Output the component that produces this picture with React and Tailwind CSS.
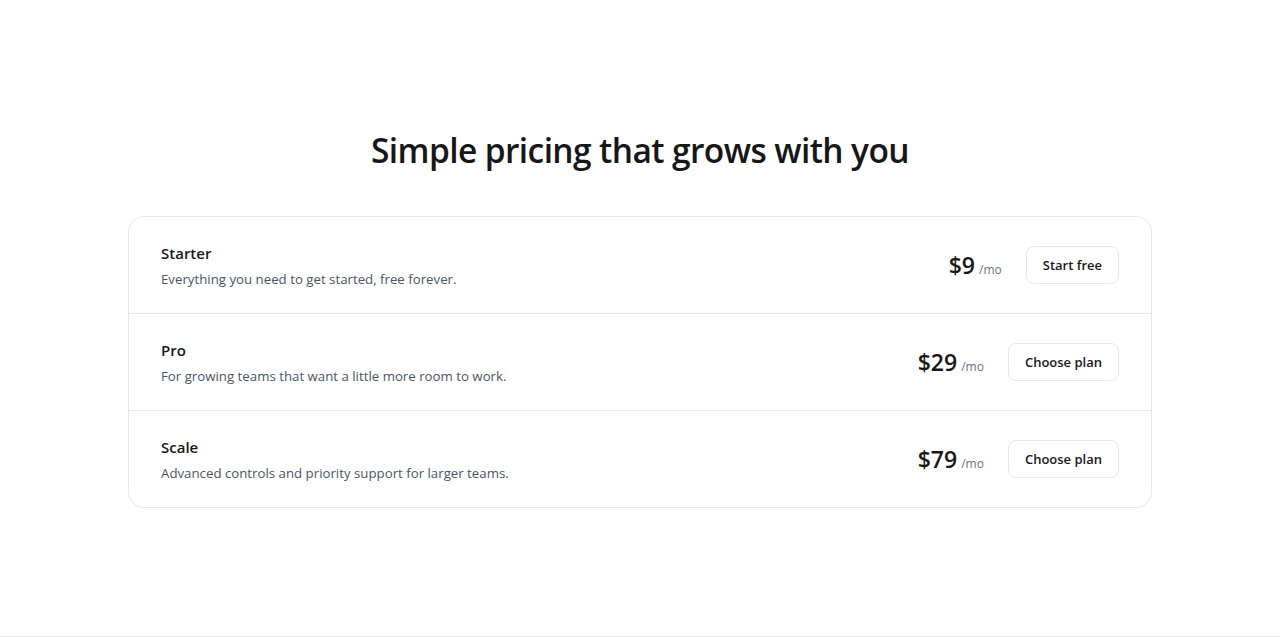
import React from "react";

const plans = [
  {
    name: "Starter",
    desc: "Everything you need to get started, free forever.",
    price: "$9",
    cta: "Start free",
  },
  {
    name: "Pro",
    desc: "For growing teams that want a little more room to work.",
    price: "$29",
    cta: "Choose plan",
  },
  {
    name: "Scale",
    desc: "Advanced controls and priority support for larger teams.",
    price: "$79",
    cta: "Choose plan",
  },
];

const App = () => {
  return (
    <div
      className="min-h-screen w-full bg-white flex flex-col items-center justify-center border-b border-gray-200 text-[#171717]"
      style={{ fontFamily: '"Open Sans", "Noto Sans", sans-serif' }}
    >
      {/* Heading */}
      <h1 className="text-[33.5px] leading-10 font-semibold tracking-[-0.6px] text-center pt-[2px]">
        Simple pricing that grows with you
      </h1>

      {/* Plans */}
      <div className="w-full max-w-5xl mt-[46px] border border-gray-200 rounded-2xl bg-white">
        {plans.map((plan, i) => (
          <div
            key={plan.name}
            className={
              "flex items-center justify-between px-8 py-6" +
              (i > 0 ? " border-t border-gray-200" : "")
            }
          >
            <div className="flex flex-col gap-1">
              <span className="text-[15px] leading-6 font-semibold">
                {plan.name}
              </span>
              <span className="text-[13.25px] leading-5 text-gray-600">
                {plan.desc}
              </span>
            </div>

            <div className="flex items-center gap-6">
              <div className="flex items-baseline gap-1">
                <span className="text-[23px] font-semibold">{plan.price}</span>
                <span className="text-xs text-gray-500">/mo</span>
              </div>
              <button className="px-4 py-2 text-[13px] leading-5 font-semibold border border-gray-200 rounded-lg bg-white">
                {plan.cta}
              </button>
            </div>
          </div>
        ))}
      </div>
    </div>
  );
};

export default App;
